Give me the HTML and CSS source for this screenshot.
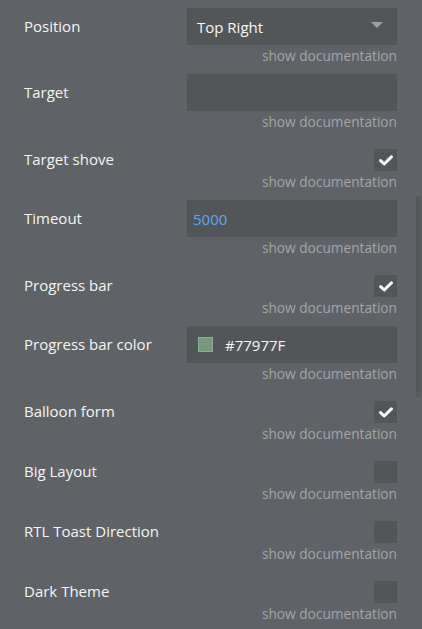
FILE: index.html
```html
<!DOCTYPE html>
<html>
<head>
<meta charset="utf-8">
<link rel="stylesheet" href="styles.css">
</head>
<body>
<div class="panel">
  <div class="row row-input">
    <div class="main">
      <span class="label">Position</span>
      <div class="field select"><span class="val">Top Right</span><span class="caret"></span></div>
    </div>
    <div class="doc">show documentation</div>
  </div>
  <div class="row row-input">
    <div class="main">
      <span class="label">Target</span>
      <div class="field"></div>
    </div>
    <div class="doc">show documentation</div>
  </div>
  <div class="row row-check">
    <div class="main">
      <span class="label">Target shove</span>
      <div class="cb"><svg viewBox="0 0 14 11" width="14" height="11"><path d="M1.6 5.6 L5.2 9 L12.4 1.9" fill="none" stroke="#fff" stroke-width="3" stroke-linecap="round" stroke-linejoin="round"/></svg></div>
    </div>
    <div class="doc">show documentation</div>
  </div>
  <div class="row row-input">
    <div class="main">
      <span class="label">Timeout</span>
      <div class="field num"><span class="blue">5000</span></div>
    </div>
    <div class="doc">show documentation</div>
  </div>
  <div class="row row-check">
    <div class="main">
      <span class="label">Progress bar</span>
      <div class="cb"><svg viewBox="0 0 14 11" width="14" height="11"><path d="M1.6 5.6 L5.2 9 L12.4 1.9" fill="none" stroke="#fff" stroke-width="3" stroke-linecap="round" stroke-linejoin="round"/></svg></div>
    </div>
    <div class="doc">show documentation</div>
  </div>
  <div class="row row-input">
    <div class="main">
      <span class="label">Progress bar color</span>
      <div class="field color"><span class="swatch"></span><span class="val">#77977F</span></div>
    </div>
    <div class="doc">show documentation</div>
  </div>
  <div class="row row-check">
    <div class="main">
      <span class="label">Balloon form</span>
      <div class="cb"><svg viewBox="0 0 14 11" width="14" height="11"><path d="M1.6 5.6 L5.2 9 L12.4 1.9" fill="none" stroke="#fff" stroke-width="3" stroke-linecap="round" stroke-linejoin="round"/></svg></div>
    </div>
    <div class="doc">show documentation</div>
  </div>
  <div class="row row-check">
    <div class="main">
      <span class="label">Big Layout</span>
      <div class="cb"></div>
    </div>
    <div class="doc">show documentation</div>
  </div>
  <div class="row row-check">
    <div class="main">
      <span class="label">RTL Toast Direction</span>
      <div class="cb"></div>
    </div>
    <div class="doc">show documentation</div>
  </div>
  <div class="row row-check">
    <div class="main">
      <span class="label">Dark Theme</span>
      <div class="cb"></div>
    </div>
    <div class="doc">show documentation</div>
  </div>
  <div class="scrollbar"></div>
</div>
</body>
</html>
```
FILE: styles.css
```css
html, body {
  margin: 0;
  padding: 0;
  background: #5f6367;
  height: 100%;
  overflow: hidden;
}
.panel {
  position: relative;
  padding: 8px 25px 0 24px;
  display: flex;
  flex-direction: column;
  gap: 8px;
  font-family: "Open Sans", "Noto Sans", sans-serif;
  font-size: 15px;
  color: #f2f2f2;
}
.row {
  display: flex;
  flex-direction: column;
}
.main {
  display: flex;
  align-items: center;
  justify-content: space-between;
}
.row-input .main { height: 37px; }
.row-check .main { height: 22px; margin-top: 9px; }
.label {
  line-height: 20px;
  padding-bottom: 2px;
  color: #f4f4f4;
}
.field {
  width: 210px;
  height: 37px;
  box-sizing: border-box;
  background: #525659;
  display: flex;
  align-items: center;
  padding-left: 10px;
}
.select { justify-content: space-between; padding-right: 14px; }
.val { color: #f6f6f6; }
.caret {
  width: 0;
  height: 0;
  border-left: 6px solid transparent;
  border-right: 6px solid transparent;
  border-top: 6px solid #9da1a4;
  margin-top: -3px;
}
.num { padding-left: 6px; }
.blue { color: #5aa6f2; }
.color { padding-left: 11px; gap: 12px; }
.swatch {
  width: 15px;
  height: 15px;
  box-sizing: border-box;
  background: #77977f;
  border: 1px solid #8fae97;
}
.cb {
  width: 23px;
  height: 22px;
  background: #525659;
  display: flex;
  align-items: center;
  justify-content: center;
}
.doc {
  text-align: right;
  font-size: 13.7px;
  line-height: 22px;
  height: 21px;
  color: #a2a6a9;
}
.scrollbar {
  position: absolute;
  left: 416px;
  top: 196px;
  width: 5px;
  height: 201px;
  background: #55595c;
}
```
